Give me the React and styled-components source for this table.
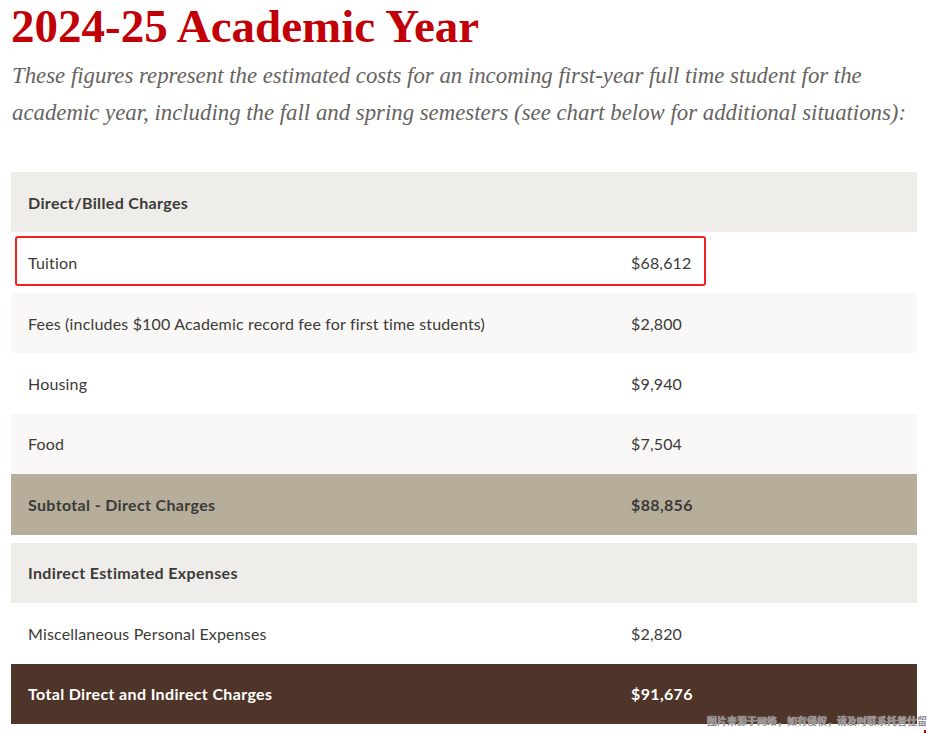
import React from "react";
import styled, { createGlobalStyle } from "styled-components";

const Global = createGlobalStyle`
  html, body { margin: 0; padding: 0; background: #fff; }
  body { width: 927px; height: 733px; overflow: hidden; }
`;

const Page = styled.div`
  position: relative;
  width: 927px;
  height: 733px;
  padding: 0 10px 0 11px;
  box-sizing: border-box;
`;

const Title = styled.h1`
  margin: 0;
  font-family: "Liberation Serif", "Times New Roman", serif;
  font-weight: 700;
  font-size: 47px;
  line-height: 52px;
  color: #c00006;
`;

const Lead = styled.p`
  margin: 5px 0 0 1px;
  font-family: "Liberation Serif", "Times New Roman", serif;
  font-style: italic;
  font-size: 22.8px;
  line-height: 37px;
  color: #666360;
  white-space: nowrap;
`;

const Table = styled.div`
  margin-top: 41px;
  display: flex;
  flex-direction: column;
  font-family: "Lato", "Liberation Sans", sans-serif;
  font-size: 16px;
`;

const tones = {
  head: { bg: "#efede9", fg: "#3c3a37", weight: 700 },
  white: { bg: "#ffffff", fg: "#3c3a37", weight: 400 },
  light: { bg: "#f9f8f6", fg: "#3c3a37", weight: 400 },
  sub: { bg: "#b6ae9b", fg: "#3c3a37", weight: 700 },
  total: { bg: "#4f3529", fg: "#ffffff", weight: 700 },
};

const Row = styled.div`
  position: relative;
  display: grid;
  grid-template-columns: 620px 1fr;
  align-items: center;
  height: 60.44px;
  margin-top: ${(p) => p.$gap || 0}px;
  background: ${(p) => tones[p.$tone].bg};
  color: ${(p) => tones[p.$tone].fg};
  font-weight: ${(p) => tones[p.$tone].weight};
  letter-spacing: ${(p) => (tones[p.$tone].weight === 700 ? 0.35 : 0.17)}px;
`;

const Label = styled.div`
  padding-left: 17px;
`;

const Value = styled.div``;

const Highlight = styled.div`
  position: absolute;
  left: 4px;
  top: 4px;
  width: 691px;
  height: 50px;
  box-sizing: border-box;
  border: 2px solid #f5211f;
  border-radius: 3px;
  pointer-events: none;
`;

const Watermark = styled.div`
  position: absolute;
  left: 707px;
  bottom: 6px;
  font-family: "Noto Sans CJK SC", sans-serif;
  font-size: 10px;
  font-weight: 700;
  line-height: 13px;
  color: #8c8c8c;
  text-shadow: 0 0 1px #fff;
  white-space: nowrap;
`;

const Tick = styled.div`
  position: absolute;
  right: 1px;
  bottom: 0;
  width: 2px;
  height: 3px;
  background: #c00000;
`;

const rows = [
  { tone: "head", label: "Direct/Billed Charges", value: "" },
  { tone: "white", label: "Tuition", value: "$68,612", mark: true },
  { tone: "light", label: "Fees (includes $100 Academic record fee for first time students)", value: "$2,800" },
  { tone: "white", label: "Housing", value: "$9,940" },
  { tone: "light", label: "Food", value: "$7,504" },
  { tone: "sub", label: "Subtotal - Direct Charges", value: "$88,856" },
  { tone: "head", label: "Indirect Estimated Expenses", value: "", gap: 8 },
  { tone: "white", label: "Miscellaneous Personal Expenses", value: "$2,820" },
  { tone: "total", label: "Total Direct and Indirect Charges", value: "$91,676" },
];

export default function App() {
  return (
    <>
      <Global />
      <Page>
        <Title>2024-25 Academic Year</Title>
        <Lead>
          These figures represent the estimated costs for an incoming first-year full time student for the
          <br />
          academic year, including the fall and spring semesters (see chart below for additional situations):
        </Lead>
        <Table>
          {rows.map((r, i) => (
            <Row key={i} $tone={r.tone} $gap={r.gap}>
              <Label>{r.label}</Label>
              <Value>{r.value}</Value>
              {r.mark && <Highlight />}
            </Row>
          ))}
        </Table>
        <Watermark>图片来源于网络，如有侵权，请及时联系托普仕留学删除</Watermark>
        <Tick />
      </Page>
    </>
  );
}
